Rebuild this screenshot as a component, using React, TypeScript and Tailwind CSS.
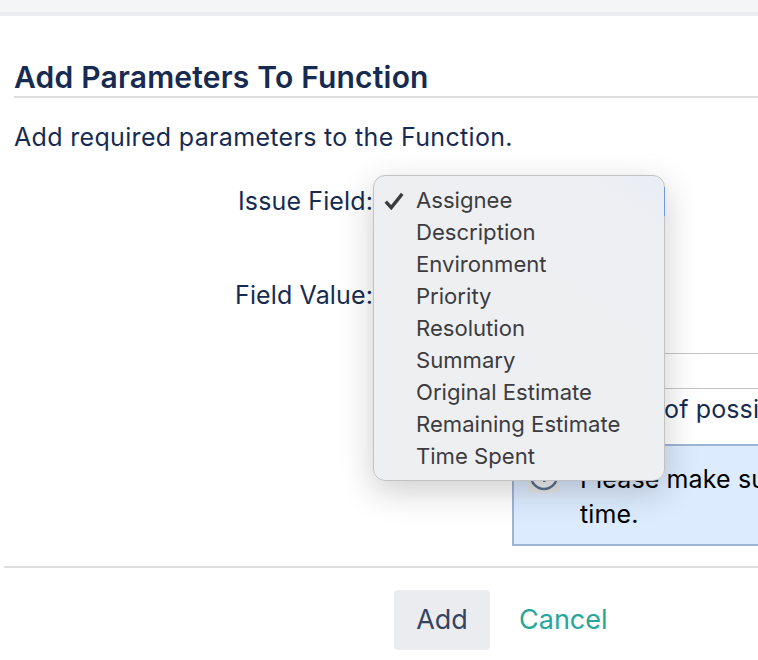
const fields = [
  'Assignee',
  'Description',
  'Environment',
  'Priority',
  'Resolution',
  'Summary',
  'Original Estimate',
  'Remaining Estimate',
  'Time Spent',
];

export default function App() {
  return (
    <div className="relative h-[660px] w-full overflow-hidden bg-white font-['Inter',sans-serif] text-[#172b52]">
      {/* Top bar */}
      <div className="h-4 border-b-4 border-[#ebecf0] bg-[#f4f5f7]" />

      {/* Dialog body */}
      <div className="pl-[14px] pt-[43px]">
        <h2 className="h-[39px] whitespace-nowrap border-b-2 border-[#dddee0] text-[30px] font-semibold leading-[36px] tracking-[0.2px]">
          Add Parameters To Function
        </h2>
        <p className="mt-[24px] text-[25px] leading-[30px] tracking-[0.33px]">
          Add required parameters to the Function.
        </p>
      </div>

      {/* Form */}
      <div className="mt-[32px] flex flex-col text-[25px] tracking-[0.13px]">
        <div className="flex items-center">
          <label className="w-[373px] pt-[1px] text-right leading-[32px]">Issue Field:</label>
          <div className="ml-px h-[30px] w-[291px] rounded-[3px] border-2 border-[#4c7fd0] bg-white" />
        </div>
        <div className="mt-[62px] flex items-center">
          <label className="w-[373px] text-right leading-[32px]">Field Value:</label>
        </div>
        <div className="ml-[374px] mt-[42px] h-[36px] border border-r-0 border-[#c4c5c8]" />
        <p className="ml-[374px] mt-[4px] whitespace-nowrap pl-[150px] leading-[32px]">
          Comma list of possible values
        </p>
        <div className="ml-[512px] mt-[19px] h-[102px] w-[400px] border-2 border-[#9db5d4] bg-[#dcebfe] pt-[16px] text-black">
          <div className="flex">
            <div className="ml-[14px] mr-[20px] mt-[-1px] h-[32px] w-[32px] shrink-0 bg-[#e6e7e9]">
              <svg viewBox="0 0 32 32" className="h-8 w-8">
                <circle cx="16" cy="15" r="13" fill="#eef0f3" stroke="#5b7090" strokeWidth="2.5" />
                <rect x="15" y="7" width="2.5" height="14" fill="#5b7090" />
              </svg>
            </div>
            <p className="w-[600px] shrink-0 leading-[35px]">
              Please make sure you add values one at a
              <br />
              time.
            </p>
          </div>
        </div>
      </div>

      {/* Footer */}
      <div className="absolute bottom-0 left-[4px] right-0 h-[94px] border-t-2 border-[#dddee0]">
        <div className="ml-[390px] mt-[22px] flex items-center">
          <button className="h-[60px] w-[96px] rounded-[4px] bg-[#ebecf0] pt-px text-[27px] text-[#344563]">Add</button>
          <a className="ml-[29px] pt-px text-[27px] text-[#26a69a]">Cancel</a>
        </div>
      </div>

      {/* Open select menu */}
      <div className="absolute left-[373px] top-[175px] h-[306px] w-[292px] rounded-[12px] border border-[#c2c2c4] bg-[linear-gradient(215deg,#e9edf5_0%,#eeeff2_15%,#eeeff1_100%)] py-[9px] shadow-[0_10px_34px_rgba(0,0,0,0.2)]">
        {fields.map((field, index) => (
          <div key={field} className="flex h-8 items-center text-[22.1px] text-[#3c3c3f]">
            <span className="flex w-[42px] justify-end pr-[11px]">
              {index === 0 && (
                <svg viewBox="0 0 20 20" className="h-[22px] w-[22px]">
                  <path d="M2.5 10.5 L7.5 16 L17.5 3.5" fill="none" stroke="#3c3c3f" strokeWidth="3" />
                </svg>
              )}
            </span>
            {field}
          </div>
        ))}
        {/* blue edge of the select showing through the menu */}
        <div className="absolute right-[-1px] top-[11px] h-[29px] w-px bg-[#6f9ade]" />
      </div>
    </div>
  );
}
